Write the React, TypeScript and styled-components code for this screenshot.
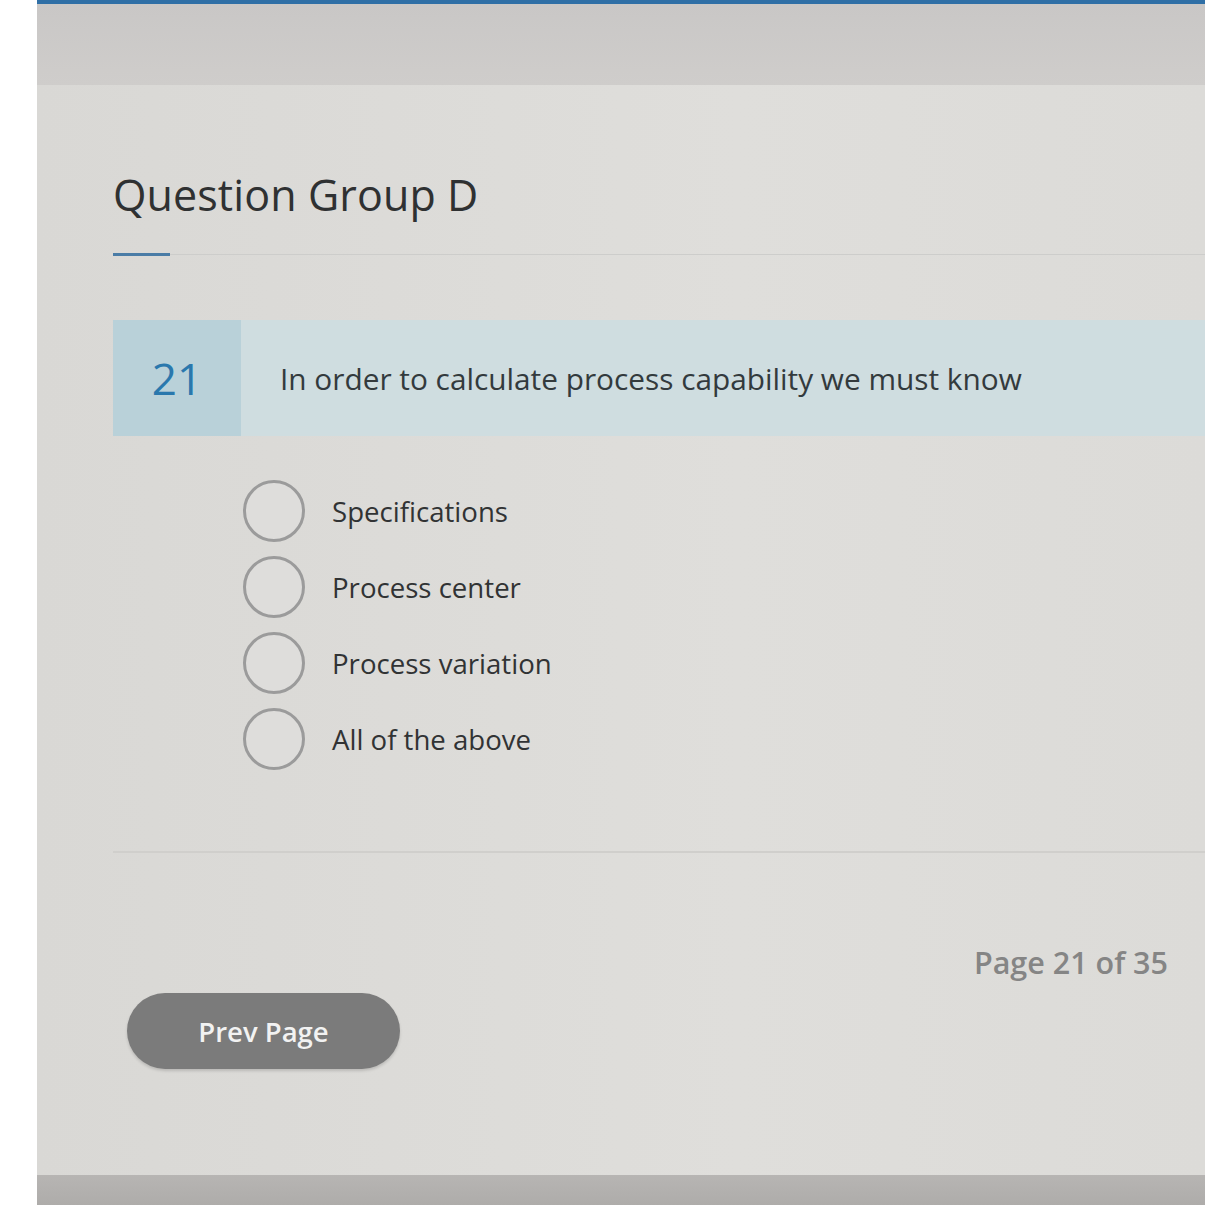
import React from "react";
import styled, { createGlobalStyle } from "styled-components";

const Global = createGlobalStyle`
  html, body { margin: 0; padding: 0; }
  body { font-family: "Open Sans", "Noto Sans", sans-serif; background: #ffffff; }
`;

const Page = styled.div`
  display: flex;
  width: 1205px;
  height: 1205px;
  overflow: hidden;
`;

const LeftStrip = styled.div`
  width: 37px;
  flex: none;
  background: #ffffff;
`;

const Screen = styled.div`
  flex: 1;
  display: flex;
  flex-direction: column;
  background: #dcdbd8;
`;

const TopBar = styled.div`
  height: 4px;
  background: #2f6fa6;
`;

const HeaderBand = styled.div`
  height: 81px;
  background: linear-gradient(180deg, #c9c7c6 0%, #cfcdcb 100%);
`;

const Content = styled.main`
  flex: 1;
  display: flex;
  flex-direction: column;
  padding: 86px 37px 0 76px;
  background: linear-gradient(90deg, #d9d8d5 0%, #dfdedb 60%, #dcdbd8 100%);
`;

const Title = styled.h1`
  margin: 0;
  font-size: 43px;
  line-height: 48px;
  font-weight: 500;
  color: #2f3132;
  letter-spacing: 0.1px;
`;

const Divider = styled.div`
  margin: 34px -37px 0 0;
  height: 3px;
  display: flex;
  align-items: center;
`;

const DividerLine = styled.div`
  flex: 1;
  height: 1px;
  background: #cdcdcb;
`;

const DividerAccent = styled.div`
  width: 57px;
  height: 3px;
  background: #4a7ca6;
`;

const QuestionBar = styled.section`
  margin: 64px -37px 0 0;
  height: 116px;
  display: flex;
  align-items: center;
  background: #cfdde0;
`;

const NumberCell = styled.div`
  width: 128px;
  height: 100%;
  display: flex;
  align-items: center;
  justify-content: center;
  background: #b9d1d9;
  font-size: 44px;
  font-weight: 500;
  color: #2a78ad;
`;

const QuestionText = styled.div`
  margin-left: 39px;
  font-size: 29.8px;
  color: #333a3d;
`;

const Options = styled.div`
  margin: 44px 0 0 130px;
  display: flex;
  flex-direction: column;
  gap: 14px;
`;

const Option = styled.label`
  display: flex;
  align-items: center;
  height: 62px;
  gap: 27px;
`;

const Radio = styled.span`
  width: 56px;
  height: 56px;
  border: 3px solid #9b9b9b;
  border-radius: 50%;
  background: #dedddb;
  flex: none;
`;

const OptionText = styled.span`
  font-size: 27.6px;
  color: #313334;
`;

const Separator = styled.div`
  margin: 81px -37px 0 0;
  height: 2px;
  background: #d0cfcc;
`;

const PageInfo = styled.div`
  margin-top: 89px;
  align-self: flex-end;
  font-size: 30.5px;
  line-height: 40px;
  font-weight: 600;
  color: #858585;
`;

const PrevButton = styled.button`
  margin: 11px 0 0 14px;
  align-self: flex-start;
  width: 273px;
  height: 76px;
  border: none;
  border-radius: 38px;
  background: #7b7b7b;
  color: #f2f2f2;
  font-family: "Open Sans", sans-serif;
  font-size: 27.5px;
  font-weight: 600;
  box-shadow: 0 2px 3px rgba(0, 0, 0, 0.15);
`;

const BottomBand = styled.div`
  height: 30px;
  flex: none;
  background: linear-gradient(180deg, #b7b5b3 0%, #aeacaa 100%);
`;

const options = ["Specifications", "Process center", "Process variation", "All of the above"];

export default function App() {
  return (
    <>
      <Global />
      <Page>
        <LeftStrip />
        <Screen>
          <TopBar />
          <HeaderBand />
          <Content>
            <Title>Question Group D</Title>
            <Divider>
              <DividerAccent />
              <DividerLine />
            </Divider>
            <QuestionBar>
              <NumberCell>21</NumberCell>
              <QuestionText>In order to calculate process capability we must know</QuestionText>
            </QuestionBar>
            <Options>
              {options.map((o) => (
                <Option key={o}>
                  <Radio />
                  <OptionText>{o}</OptionText>
                </Option>
              ))}
            </Options>
            <Separator />
            <PageInfo>Page 21 of 35</PageInfo>
            <PrevButton>Prev Page</PrevButton>
          </Content>
          <BottomBand />
        </Screen>
      </Page>
    </>
  );
}
